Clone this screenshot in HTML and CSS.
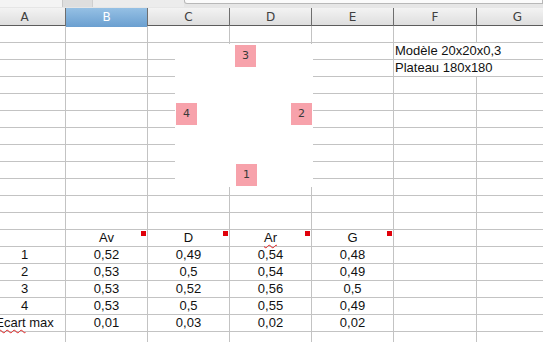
FILE: index.html
```html
<!DOCTYPE html>
<html lang="fr">
<head>
<meta charset="utf-8">
<title>Feuille</title>
<link rel="stylesheet" href="styles.css">
</head>
<body>
<div class="app">
  <div class="toolbar">
    <div class="tb-a"></div>
    <div class="tb-b"></div>
    <div class="tb-c"></div>
    <div class="tb-input"></div>
  </div>
  <div class="sheet">
    <div class="colhead">
      <div class="h">A</div><div class="h sel">B</div><div class="h">C</div><div class="h">D</div><div class="h">E</div><div class="h">F</div><div class="h">G</div>
    </div>
    <div class="row"><div class="c"></div><div class="c"></div><div class="c"></div><div class="c"></div><div class="c"></div><div class="c"></div><div class="c"></div></div>
    <div class="row"><div class="c"></div><div class="c"></div><div class="c"></div><div class="c"></div><div class="c"></div><div class="c left span2">Modèle 20x20x0,3</div></div>
    <div class="row"><div class="c"></div><div class="c"></div><div class="c"></div><div class="c"></div><div class="c"></div><div class="c left span2">Plateau 180x180</div></div>
    <div class="row"><div class="c"></div><div class="c"></div><div class="c"></div><div class="c"></div><div class="c"></div><div class="c"></div><div class="c"></div></div>
    <div class="row"><div class="c"></div><div class="c"></div><div class="c"></div><div class="c"></div><div class="c"></div><div class="c"></div><div class="c"></div></div>
    <div class="row"><div class="c"></div><div class="c"></div><div class="c"></div><div class="c"></div><div class="c"></div><div class="c"></div><div class="c"></div></div>
    <div class="row"><div class="c"></div><div class="c"></div><div class="c"></div><div class="c"></div><div class="c"></div><div class="c"></div><div class="c"></div></div>
    <div class="row"><div class="c"></div><div class="c"></div><div class="c"></div><div class="c"></div><div class="c"></div><div class="c"></div><div class="c"></div></div>
    <div class="row"><div class="c"></div><div class="c"></div><div class="c"></div><div class="c"></div><div class="c"></div><div class="c"></div><div class="c"></div></div>
    <div class="row"><div class="c"></div><div class="c"></div><div class="c"></div><div class="c"></div><div class="c"></div><div class="c"></div><div class="c"></div></div>
    <div class="row"><div class="c"></div><div class="c"></div><div class="c"></div><div class="c"></div><div class="c"></div><div class="c"></div><div class="c"></div></div>
    <div class="row"><div class="c"></div><div class="c"></div><div class="c"></div><div class="c"></div><div class="c"></div><div class="c"></div><div class="c"></div></div>
    <div class="row"><div class="c"></div><div class="c note">Av</div><div class="c note">D</div><div class="c note"><span class="spell">Ar</span></div><div class="c note">G</div><div class="c"></div><div class="c"></div></div>
    <div class="row"><div class="c">1</div><div class="c">0,52</div><div class="c">0,49</div><div class="c">0,54</div><div class="c">0,48</div><div class="c"></div><div class="c"></div></div>
    <div class="row"><div class="c">2</div><div class="c">0,53</div><div class="c">0,5</div><div class="c">0,54</div><div class="c">0,49</div><div class="c"></div><div class="c"></div></div>
    <div class="row"><div class="c">3</div><div class="c">0,53</div><div class="c">0,52</div><div class="c">0,56</div><div class="c">0,5</div><div class="c"></div><div class="c"></div></div>
    <div class="row"><div class="c">4</div><div class="c">0,53</div><div class="c">0,5</div><div class="c">0,55</div><div class="c">0,49</div><div class="c"></div><div class="c"></div></div>
    <div class="row"><div class="c"><span class="spell">Ecart</span> max</div><div class="c">0,01</div><div class="c">0,03</div><div class="c">0,02</div><div class="c">0,02</div><div class="c"></div><div class="c"></div></div>
    <div class="row"><div class="c"></div><div class="c"></div><div class="c"></div><div class="c"></div><div class="c"></div><div class="c"></div><div class="c"></div></div>
  </div>
  <div class="drawing"></div>
  <div class="pin p3">3</div>
  <div class="pin p4">4</div>
  <div class="pin p2">2</div>
  <div class="pin p1">1</div>
</div>
</body>
</html>
```

FILE: styles.css
```css
html, body {
  margin: 0;
  padding: 0;
  background: #ffffff;
  overflow: hidden;
}

.app {
  position: relative;
  width: 543px;
  height: 342px;
  overflow: hidden;
  font-family: "Liberation Sans", Arial, sans-serif;
  font-size: 13px;
  color: #111;
}

.toolbar {
  display: flex;
  height: 8px;
  background: #e6e6e6;
}
.tb-a {
  width: 62px;
  height: 7px;
  background: #f4f4f4;
  border-right: 1px solid #c9c9c9;
}
.tb-b {
  width: 29px;
  height: 7px;
  background: #dedede;
  border-right: 1px solid #cfcfcf;
}
.tb-c {
  width: 91px;
  height: 7px;
  background: #ececec;
}
.tb-input {
  flex: 1;
  height: 3px;
  background: #fbfbfb;
  border: 1px solid #b8b8b8;
  border-top: none;
  border-radius: 0 0 0 3px;
}

.sheet {
  margin-left: -16px;
  width: 600px;
}

.colhead,
.row {
  display: grid;
  grid-template-columns: 82px 82px 82px 82px 82px 83px 82px;
}

.colhead {
  height: 18px;
  box-sizing: border-box;
  border-bottom: 1px solid #5c5c5c;
  background: linear-gradient(#f3f3f3, #dedede);
}
.h {
  box-sizing: border-box;
  border-right: 1px solid #6e6e6e;
  text-align: center;
  font-family: "DejaVu Sans", sans-serif;
  font-size: 12px;
  line-height: 19px;
  color: #404040;
}
.h.sel {
  background: linear-gradient(#95c0e4, #6a9fd0);
  color: #ffffff;
}

.row {
  height: 17px;
}
.c {
  position: relative;
  box-sizing: border-box;
  border-right: 1px solid #c3c3c3;
  border-bottom: 1px solid #c3c3c3;
  text-align: center;
  line-height: 16px;
  white-space: nowrap;
}
.c.left {
  text-align: left;
  padding-left: 1px;
}
.c.span2 {
  grid-column: span 2;
}
.c.note::after {
  content: "";
  position: absolute;
  right: 1px;
  top: 1px;
  width: 5px;
  height: 5px;
  background: #e0000a;
}

.spell {
  text-decoration: underline wavy #e02020;
  text-decoration-thickness: 1px;
  text-underline-offset: 2px;
  text-decoration-skip-ink: none;
}

.drawing {
  position: absolute;
  left: 175px;
  top: 44px;
  width: 138px;
  height: 143px;
  background: #ffffff;
}

.pin {
  position: absolute;
  width: 21px;
  height: 22px;
  background: #f7a2ab;
  color: #3a3a3a;
  font-family: "DejaVu Sans", sans-serif;
  font-size: 11px;
  line-height: 22px;
  text-align: center;
}
.p3 { left: 235px; top: 45px; }
.p4 { left: 176px; top: 103px; }
.p2 { left: 291px; top: 103px; }
.p1 { left: 236px; top: 164px; }
```
